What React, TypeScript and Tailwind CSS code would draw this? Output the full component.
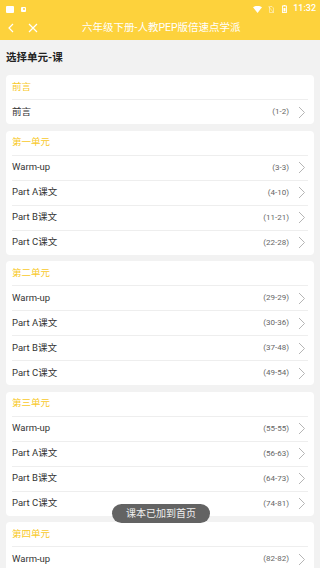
import React from 'react';

type Lesson = { name: string; range: string };
type Unit = { title: string; lessons: Lesson[] };

const units: Unit[] = [
  { title: '前言', lessons: [{ name: '前言', range: '(1-2)' }] },
  {
    title: '第一单元',
    lessons: [
      { name: 'Warm-up', range: '(3-3)' },
      { name: 'Part A课文', range: '(4-10)' },
      { name: 'Part B课文', range: '(11-21)' },
      { name: 'Part C课文', range: '(22-28)' },
    ],
  },
  {
    title: '第二单元',
    lessons: [
      { name: 'Warm-up', range: '(29-29)' },
      { name: 'Part A课文', range: '(30-36)' },
      { name: 'Part B课文', range: '(37-48)' },
      { name: 'Part C课文', range: '(49-54)' },
    ],
  },
  {
    title: '第三单元',
    lessons: [
      { name: 'Warm-up', range: '(55-55)' },
      { name: 'Part A课文', range: '(56-63)' },
      { name: 'Part B课文', range: '(64-73)' },
      { name: 'Part C课文', range: '(74-81)' },
    ],
  },
  {
    title: '第四单元',
    lessons: [{ name: 'Warm-up', range: '(82-82)' }],
  },
];

function Chevron() {
  return (
    <svg width="8" height="13" viewBox="0 0 8 13" fill="none" className="ml-[9px] mr-[2px]">
      <path d="M1 1l5.5 5.5L1 12" stroke="#b5b5b5" strokeWidth="1" />
    </svg>
  );
}

function StatusBar() {
  return (
    <div className="flex h-[16px] items-center justify-between pl-[6px] pr-[4px] pt-[2px]">
      <div className="flex items-center gap-[7px]">
        <div className="h-[7px] w-[8px] rounded-[1px] bg-white" />
        <div className="flex h-[5px] w-[5px] items-center justify-center rounded-[1px] bg-white">
          <div className="h-[2px] w-[2px] rounded-full bg-[#fdd23c]" />
        </div>
      </div>
      <div className="flex items-center gap-[4px]">
        <svg width="9" height="7" viewBox="0 0 9 7">
          <path d="M0 1.2Q4.5-1.6 9 1.2L4.5 7z" fill="#fff" />
        </svg>
        <svg width="6" height="7" viewBox="0 0 6 7" className="ml-[2px]">
          <path d="M1.5 0.5h2.5l1.5 1.5v4.5h-4z" fill="none" stroke="#fff" strokeOpacity="0.6" strokeWidth="0.8" />
          <path d="M0.5 0.5l5 6" stroke="#fff" strokeOpacity="0.6" strokeWidth="0.8" />
        </svg>
        <svg width="5" height="8" viewBox="0 0 5 8" className="ml-[4px]">
          <rect x="1.5" y="0" width="2" height="1" fill="#fff" />
          <rect x="0.5" y="1" width="4" height="6.5" fill="none" stroke="#fff" strokeWidth="0.9" />
          <rect x="1.5" y="3" width="2" height="3.5" fill="#fff" />
        </svg>
        <span className="ml-[2px] text-[9px] font-medium text-white [font-family:Roboto,sans-serif]">11:32</span>
      </div>
    </div>
  );
}

export default function App() {
  return (
    <div className="relative h-[568px] w-[320px] overflow-hidden bg-[#f2f2f2] [font-family:Roboto,'Noto_Sans_CJK_SC',sans-serif]">
      <div className="bg-[#fdd23c]">
        <StatusBar />
        <div className="relative flex h-[24px] items-center">
          <svg width="8" height="10" viewBox="0 0 8 10" className="ml-[7px]">
            <path d="M6 1L2 5l4 4" stroke="#fff" strokeWidth="1.2" fill="none" />
          </svg>
          <svg width="10" height="10" viewBox="0 0 10 10" className="ml-[13px]">
            <path d="M1 1l8 8M9 1l-8 8" stroke="#fff" strokeWidth="1.2" />
          </svg>
          <div className="absolute left-[82px] top-0 flex h-full items-center text-[10.5px] text-white">
            六年级下册-人教PEP版倍速点学派
          </div>
        </div>
      </div>

      <div className="flex h-[35px] items-center pl-[6px] pt-[1px] text-[10.5px] font-bold text-[#222]">选择单元-课</div>

      <div className="flex flex-col gap-[6.5px] px-[6px]">
        {units.map((u) => (
          <div key={u.title} className="rounded-[4px] bg-white px-[6px]">
            <div className="flex h-[24px] items-center text-[9.5px] text-[#f8c92a]">{u.title}</div>
            {u.lessons.map((l) => (
              <div key={l.name} className="flex h-[25px] items-center border-t border-[#eeeeee]">
                <span className="flex-1 text-[9.5px] text-[#333]">{l.name}</span>
                <span className="text-[8px] text-[#666]">{l.range}</span>
                <Chevron />
              </div>
            ))}
          </div>
        ))}
      </div>

      <div className="absolute left-[112px] top-[504px] flex h-[19px] w-[98px] items-center justify-center rounded-full bg-[#636363] text-[10px] text-[#f0f0f0]">
        课本已加到首页
      </div>
    </div>
  );
}
